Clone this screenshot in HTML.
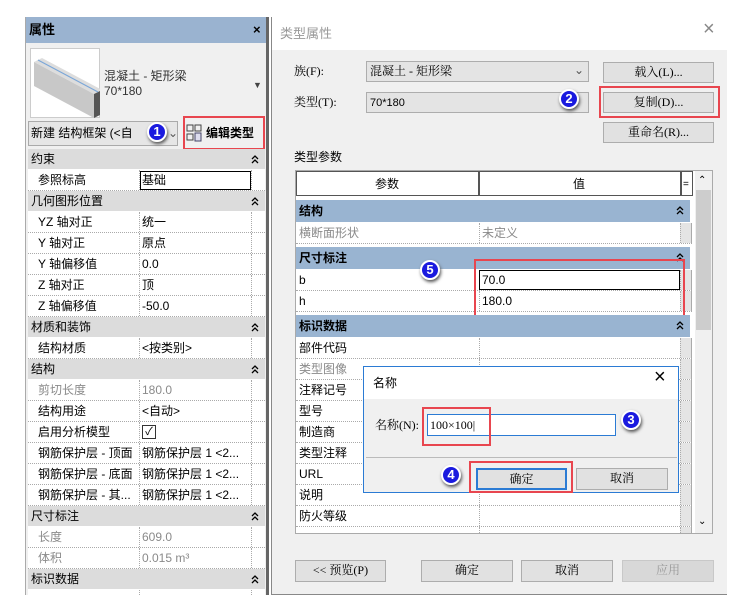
<!DOCTYPE html>
<html><head><meta charset="utf-8">
<style>
*{margin:0;padding:0;box-sizing:border-box}
body{width:737px;height:612px;background:#fff;position:relative;overflow:hidden;font-family:"Liberation Sans","Noto Sans CJK SC",sans-serif;font-size:12px;color:#000}
.a{position:absolute}
.t{position:absolute;white-space:nowrap;line-height:14px}
.lr{position:absolute;left:28px;width:237px;height:21px;background:#fff;border-bottom:1px dotted #aaa}
.lr span{position:absolute;top:2px;white-space:nowrap;line-height:16px}
.lr .k{left:10px}.lr .v{left:114px}
.lr:after{content:"";position:absolute;left:111px;top:0;bottom:0;border-left:1px dotted #aaa}
.lr:before{content:"";position:absolute;left:223px;top:0;bottom:0;border-left:1px dotted #aaa}
.lh{position:absolute;left:28px;width:237px;height:21px;background:#dcdcdc;border-bottom:1px solid #fff}
.lh span{position:absolute;left:3px;top:2px;line-height:16px}
.lh i,.rh i{position:absolute;right:6px;top:5px;width:8px;height:10px;background:no-repeat}
.lh i:before,.rh i:before{content:"";position:absolute;left:0;top:0;width:8px;height:10px;background:
linear-gradient(transparent,transparent)}
.g{color:#8a8a8a}
.rr{position:absolute;left:296px;width:396px;height:21px;background:#fff;border-bottom:1px dotted #aaa}
.rr span{position:absolute;left:3px;top:2px;white-space:nowrap;line-height:16px}
.rr:after{content:"";position:absolute;left:183px;top:0;bottom:0;border-left:1px dotted #aaa}
.rr:before{content:"";position:absolute;left:384px;top:0;bottom:0;width:10px;border-left:1px dotted #aaa;background:#e4e4e4;border-right:1px solid #aaa}
.rh{position:absolute;left:296px;width:394px;height:22px;background:#99b4d1;font-weight:bold}
.rh span{position:absolute;left:3px;top:3px;line-height:16px}
.btn{position:absolute;background:#e1e1e1;border:1px solid #adadad;text-align:center;line-height:19px;font-family:"Liberation Serif","Noto Serif CJK SC",serif}
.badge{position:absolute;width:20px;height:20px;border-radius:50%;background:#1a1adf;border:2px solid #fff;box-shadow:1px 2px 3px #555;color:#fff;font-weight:bold;font-size:13px;text-align:center;line-height:16px}
.red{position:absolute;border:2px solid #e8464f}
svg.c{position:absolute;right:6px;top:5px}
</style></head><body>

<!-- LEFT PANEL -->
<div class="a" style="left:25px;top:17px;width:244px;height:578px;background:#f0f0f0;border-left:1px solid #aaa;border-right:3px solid #666"></div>
<div class="a" style="left:26px;top:17px;width:240px;height:26px;background:#9ab3d0"></div>
<div class="t" style="left:29px;top:23px;font-weight:bold;font-size:13px">属性</div>
<div class="t" style="left:253px;top:23px;font-weight:bold;font-size:13px">×</div>
<div class="a" style="left:30px;top:48px;width:70px;height:70px;background:#fff;border:1px solid #ccc"></div>
<svg class="a" style="left:30px;top:48px" width="70" height="70">
<polygon points="4,14 12,10 72,42 64,46" fill="#ddd"/>
<polygon points="4,14 64,46 64,70 4,38" fill="#c8c8c8"/>
<polygon points="64,46 72,42 72,66 64,70" fill="#555"/>
<line x1="8" y1="12" x2="68" y2="44" stroke="#7aa6d8" stroke-width="1"/>
</svg>
<div class="t" style="left:104px;top:69px;color:#333">混凝土 - 矩形梁</div>
<div class="t" style="left:104px;top:84px;color:#333">70*180</div>
<div class="t" style="left:253px;top:78px;font-size:9px;color:#444">▼</div>
<div class="a" style="left:28px;top:121px;width:150px;height:25px;background:#e6e6e6;border:1px solid #aaa"></div>
<div class="t" style="left:31px;top:126px">新建 结构框架 (&lt;自</div>
<div class="t" style="left:168px;top:126px;color:#555">⌄</div>
<div class="badge" style="left:147px;top:122px">1</div>
<svg class="a" style="left:186px;top:123px" width="16" height="20"><rect x="1" y="2" width="6" height="6" fill="none" stroke="#444"/><rect x="1" y="11" width="6" height="6" fill="none" stroke="#444"/><rect x="9" y="2" width="6" height="6" fill="none" stroke="#444"/><rect x="9" y="10" width="6" height="8" fill="#dde" stroke="#446"/></svg>
<div class="t" style="left:206px;top:126px;font-weight:bold">编辑类型</div>
<div class="red" style="left:183px;top:116px;width:82px;height:34px"></div>

<div class="lh" style="top:149px"><span>约束</span><svg class="c" width="8" height="10"><path d="M1 5L4 2L7 5M1 9L4 6L7 9" fill="none" stroke="#000" stroke-width="1.3"/></svg></div>
<div class="lr" style="top:170px"><span class="k">参照标高</span></div>
<div class="a" style="left:140px;top:171px;width:111px;height:19px;border:1px solid #000;background:#fff"></div>
<div class="t" style="left:142px;top:173px">基础</div>
<div class="lh" style="top:191px"><span>几何图形位置</span><svg class="c" width="8" height="10"><path d="M1 5L4 2L7 5M1 9L4 6L7 9" fill="none" stroke="#000" stroke-width="1.3"/></svg></div>
<div class="lr" style="top:212px"><span class="k">YZ 轴对正</span><span class="v">统一</span></div>
<div class="lr" style="top:233px"><span class="k">Y 轴对正</span><span class="v">原点</span></div>
<div class="lr" style="top:254px"><span class="k">Y 轴偏移值</span><span class="v">0.0</span></div>
<div class="lr" style="top:275px"><span class="k">Z 轴对正</span><span class="v">顶</span></div>
<div class="lr" style="top:296px"><span class="k">Z 轴偏移值</span><span class="v">-50.0</span></div>
<div class="lh" style="top:317px"><span>材质和装饰</span><svg class="c" width="8" height="10"><path d="M1 5L4 2L7 5M1 9L4 6L7 9" fill="none" stroke="#000" stroke-width="1.3"/></svg></div>
<div class="lr" style="top:338px"><span class="k">结构材质</span><span class="v">&lt;按类别&gt;</span></div>
<div class="lh" style="top:359px"><span>结构</span><svg class="c" width="8" height="10"><path d="M1 5L4 2L7 5M1 9L4 6L7 9" fill="none" stroke="#000" stroke-width="1.3"/></svg></div>
<div class="lr" style="top:380px"><span class="k g">剪切长度</span><span class="v g">180.0</span></div>
<div class="lr" style="top:401px"><span class="k">结构用途</span><span class="v">&lt;自动&gt;</span></div>
<div class="lr" style="top:422px"><span class="k">启用分析模型</span><span class="v" style="top:3px;width:14px;height:14px;border:1px solid #333;font-size:11px;line-height:12px;text-align:center">✓</span></div>
<div class="lr" style="top:443px"><span class="k">钢筋保护层 - 顶面</span><span class="v">钢筋保护层 1 &lt;2...</span></div>
<div class="lr" style="top:464px"><span class="k">钢筋保护层 - 底面</span><span class="v">钢筋保护层 1 &lt;2...</span></div>
<div class="lr" style="top:485px"><span class="k">钢筋保护层 - 其...</span><span class="v">钢筋保护层 1 &lt;2...</span></div>
<div class="lh" style="top:506px"><span>尺寸标注</span><svg class="c" width="8" height="10"><path d="M1 5L4 2L7 5M1 9L4 6L7 9" fill="none" stroke="#000" stroke-width="1.3"/></svg></div>
<div class="lr" style="top:527px"><span class="k g">长度</span><span class="v g">609.0</span></div>
<div class="lr" style="top:548px"><span class="k g">体积</span><span class="v g">0.015 m³</span></div>
<div class="lh" style="top:569px"><span>标识数据</span><svg class="c" width="8" height="10"><path d="M1 5L4 2L7 5M1 9L4 6L7 9" fill="none" stroke="#000" stroke-width="1.3"/></svg></div>
<div class="lr" style="top:590px;height:5px;border:none"></div>
<div class="a" style="left:0;top:595px;width:737px;height:17px;background:#fff"></div>

<!-- RIGHT DIALOG -->
<div class="a" style="left:271px;top:17px;width:456px;height:578px;background:#f0f0f0;border-left:1px solid #888;border-bottom:1px solid #888"></div>
<div class="a" style="left:272px;top:17px;width:455px;height:33px;background:#fff"></div>
<div class="t" style="left:280px;top:27px;color:#999;font-size:13px">类型属性</div>
<div class="t" style="left:703px;top:22px;color:#888;font-size:20px;font-weight:100">×</div>

<div class="t" style="left:294px;top:64px;font-family:'Liberation Serif','Noto Serif CJK SC',serif">族(F):</div>
<div class="t" style="left:294px;top:95px;font-family:'Liberation Serif','Noto Serif CJK SC',serif">类型(T):</div>
<div class="a" style="left:366px;top:61px;width:223px;height:21px;background:#e4e4e4;border:1px solid #adadad"></div>
<div class="t" style="left:370px;top:64px;font-family:'Liberation Serif','Noto Serif CJK SC',serif">混凝土 - 矩形梁</div>
<div class="t" style="left:574px;top:63px;color:#555">⌄</div>
<div class="a" style="left:366px;top:92px;width:223px;height:21px;background:#e4e4e4;border:1px solid #adadad"></div>
<div class="t" style="left:370px;top:96px;font-size:11px">70*180</div>
<div class="badge" style="left:559px;top:89px">2</div>

<div class="btn" style="left:603px;top:62px;width:111px;height:21px">载入(L)...</div>
<div class="btn" style="left:603px;top:92px;width:111px;height:21px">复制(D)...</div>
<div class="red" style="left:599px;top:86px;width:121px;height:32px"></div>
<div class="btn" style="left:603px;top:122px;width:111px;height:21px">重命名(R)...</div>

<div class="t" style="left:294px;top:150px">类型参数</div>
<div class="a" style="left:295px;top:170px;width:418px;height:364px;background:#fff;border:1px solid #aaa"></div>
<div class="a" style="left:296px;top:171px;width:183px;height:25px;background:#fff;border:1px solid #555"></div>
<div class="t" style="left:375px;top:177px">参数</div>
<div class="a" style="left:479px;top:171px;width:202px;height:25px;background:#fff;border:1px solid #555"></div>
<div class="t" style="left:573px;top:177px">值</div>
<div class="a" style="left:681px;top:171px;width:12px;height:25px;background:#fff;border:1px solid #555"></div>
<div class="t" style="left:683px;top:178px;font-size:10px">=</div>
<div class="a" style="left:695px;top:171px;width:17px;height:362px;background:#f0f0f0"></div>
<div class="a" style="left:696px;top:190px;width:15px;height:140px;background:#cdcdcd"></div>
<div class="t" style="left:698px;top:174px;font-size:10px">⌃</div>
<div class="t" style="left:698px;top:515px;font-size:10px">⌄</div>

<div class="rh" style="top:200px"><span>结构</span><svg class="c" width="8" height="10"><path d="M1 5L4 2L7 5M1 9L4 6L7 9" fill="none" stroke="#000" stroke-width="1.3"/></svg></div>
<div class="rr" style="top:223px"><span class="g">横断面形状</span><span class="g" style="left:186px">未定义</span></div>
<div class="rh" style="top:247px"><span>尺寸标注</span><svg class="c" width="8" height="10"><path d="M1 5L4 2L7 5M1 9L4 6L7 9" fill="none" stroke="#000" stroke-width="1.3"/></svg></div>
<div class="rr" style="top:270px"><span>b</span></div>
<div class="rr" style="top:291px"><span>h</span><span style="left:186px">180.0</span></div>
<div class="a" style="left:479px;top:270px;width:201px;height:20px;border:1px solid #000;background:#fff"></div>
<div class="t" style="left:482px;top:273px">70.0</div>
<div class="red" style="left:474px;top:259px;width:211px;height:59px"></div>
<div class="badge" style="left:420px;top:260px">5</div>
<div class="rh" style="top:315px"><span>标识数据</span><svg class="c" width="8" height="10"><path d="M1 5L4 2L7 5M1 9L4 6L7 9" fill="none" stroke="#000" stroke-width="1.3"/></svg></div>
<div class="rr" style="top:338px"><span>部件代码</span></div>
<div class="rr" style="top:359px"><span class="g">类型图像</span></div>
<div class="rr" style="top:380px"><span>注释记号</span></div>
<div class="rr" style="top:401px"><span>型号</span></div>
<div class="rr" style="top:422px"><span>制造商</span></div>
<div class="rr" style="top:443px"><span>类型注释</span></div>
<div class="rr" style="top:464px"><span>URL</span></div>
<div class="rr" style="top:485px"><span>说明</span></div>
<div class="rr" style="top:506px"><span>防火等级</span></div>
<div class="rr" style="top:527px;height:6px;border:none"></div>

<div class="btn" style="left:295px;top:560px;width:91px;height:22px">&lt;&lt; 预览(P)</div>
<div class="btn" style="left:421px;top:560px;width:92px;height:22px">确定</div>
<div class="btn" style="left:521px;top:560px;width:92px;height:22px">取消</div>
<div class="btn" style="left:622px;top:560px;width:92px;height:22px;color:#999;background:#d8d8d8;border-color:#c8c8c8">应用</div>

<!-- NAME DIALOG -->
<div class="a" style="left:363px;top:366px;width:316px;height:127px;background:#f0f0f0;border:1px solid #2b7bd4"></div>
<div class="a" style="left:364px;top:367px;width:314px;height:32px;background:#fff"></div>
<div class="t" style="left:373px;top:376px">名称</div>
<div class="t" style="left:654px;top:370px;font-size:20px;font-weight:100">×</div>
<div class="t" style="left:375px;top:418px;font-family:'Liberation Serif','Noto Serif CJK SC',serif">名称(N):</div>
<div class="a" style="left:427px;top:414px;width:189px;height:22px;background:#fff;border:1px solid #2b7bd4"></div>
<div class="t" style="left:430px;top:418px;font-family:'Liberation Serif','Noto Serif CJK SC',serif">100×100|</div>
<div class="red" style="left:422px;top:407px;width:69px;height:39px"></div>
<div class="badge" style="left:621px;top:410px">3</div>
<div class="a" style="left:366px;top:457px;width:311px;height:1px;background:#bbb"></div>
<div class="btn" style="left:476px;top:468px;width:91px;height:22px;border:2px solid #2b7bd4;line-height:18px">确定</div>
<div class="red" style="left:469px;top:461px;width:104px;height:32px"></div>
<div class="btn" style="left:576px;top:468px;width:92px;height:22px">取消</div>
<div class="badge" style="left:441px;top:465px">4</div>
</body></html>
